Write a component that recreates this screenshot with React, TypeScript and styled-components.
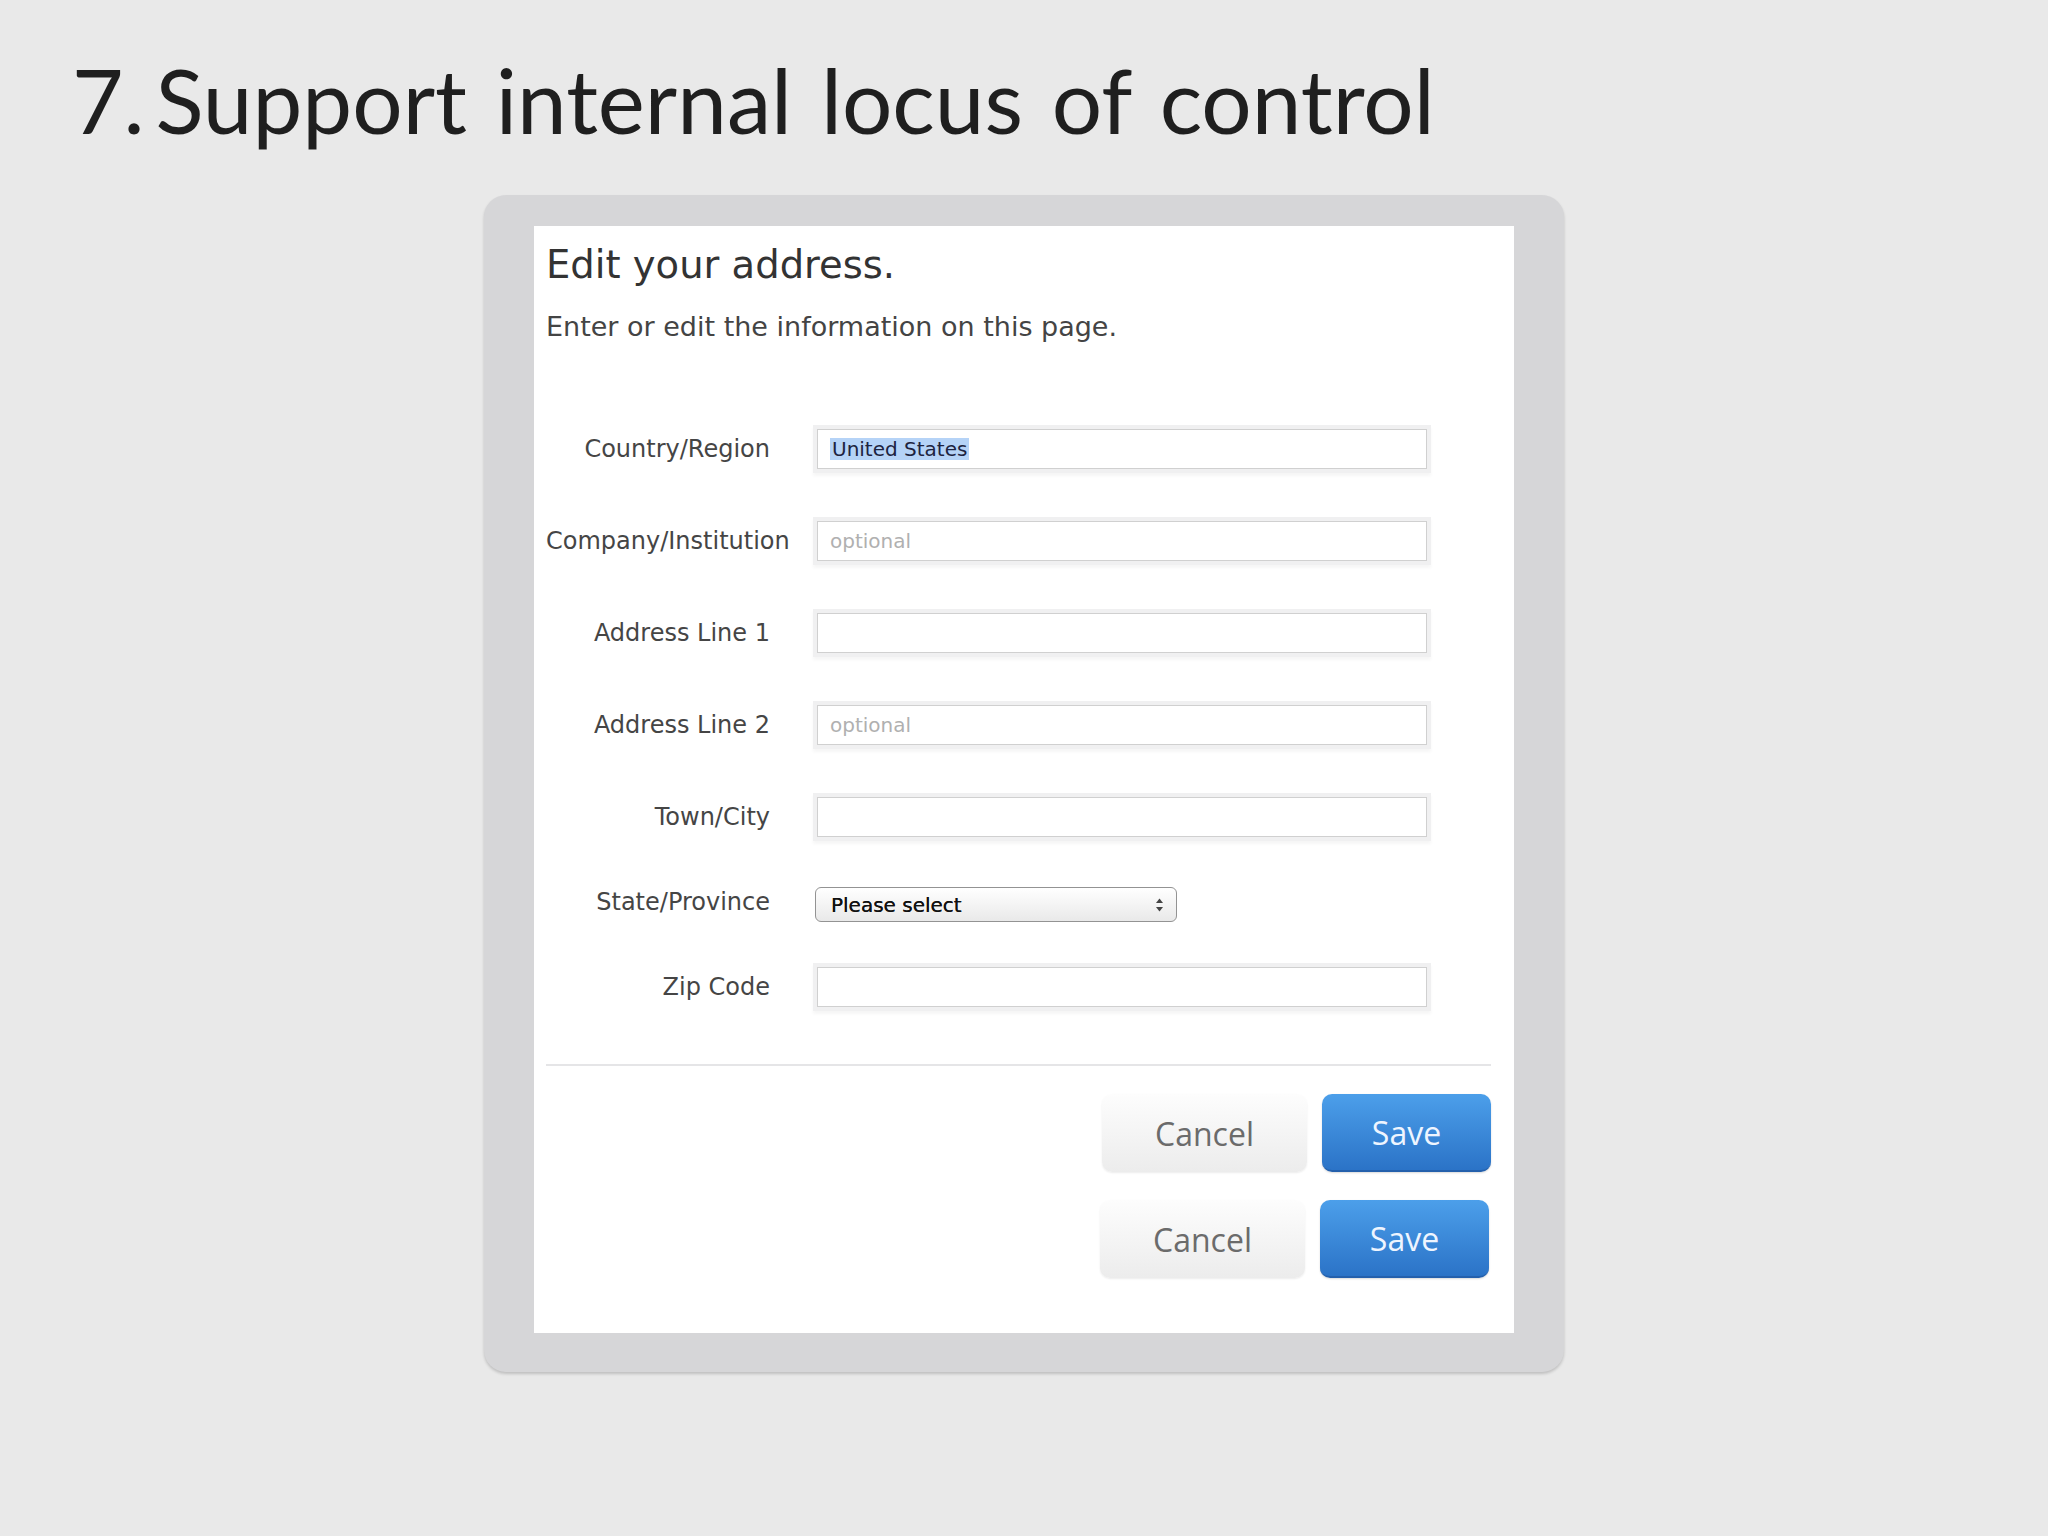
import React from 'react';
import styled, { createGlobalStyle } from 'styled-components';

const GlobalStyle = createGlobalStyle`
  html, body {
    margin: 0;
    padding: 0;
  }
  body {
    background: #e9e9e9;
    font-family: 'DejaVu Sans', 'Liberation Sans', sans-serif;
  }
`;

const Slide = styled.div`
  width: 2048px;
  height: 1536px;
  box-sizing: border-box;
  padding: 46px 0 0 72px;
`;

const Title = styled.h1`
  margin: 0;
  font-family: Lato, 'Open Sans', sans-serif;
  font-weight: 400;
  font-size: 89px;
  line-height: 108px;
  color: #1f1f1f;
  white-space: nowrap;
  word-spacing: 6px;
`;

const Number = styled.span`
  word-spacing: -12px;
`;

const Frame = styled.div`
  margin: 41px 0 0 412px;
  width: 1080px;
  box-sizing: border-box;
  padding: 31px 50px 39px;
  background: #d6d6d8;
  border-radius: 22px;
  box-shadow: 0 2px 3px rgba(0, 0, 0, 0.18);
`;

const Sheet = styled.div`
  background: #fff;
  padding: 16px 23px 55px 12px;
`;

const Heading = styled.h2`
  margin: 0 0 23px;
  font-size: 38.5px;
  line-height: 46px;
  font-weight: 400;
  color: #333;
`;

const Intro = styled.p`
  margin: 0 0 60px;
  font-size: 27px;
  line-height: 32px;
  color: #444;
`;

const Form = styled.div`
  display: flex;
  flex-direction: column;
`;

const FieldRow = styled.div<{ $h: number }>`
  display: flex;
  align-items: center;
  height: ${p => p.$h}px;
`;

const Label = styled.div<{ $lift?: number }>`
  flex: none;
  width: 224px;
  text-align: right;
  white-space: nowrap;
  font-size: 24px;
  color: #454545;
  margin-bottom: ${p => (p.$lift || 0) * 2}px;
`;

const FieldBox = styled.div`
  flex: none;
  margin-left: 47px;
  width: 610px;
  height: 40px;
  box-sizing: border-box;
  padding: 0 12px;
  display: flex;
  align-items: center;
  background: #fff;
  border: 1px solid #d0d0d0;
  box-shadow: 0 0 0 4px #f0f0f1, 0 3px 3px 4px rgba(0, 0, 0, 0.04);
  font-size: 20px;
`;

const Selected = styled.span`
  background: #b5d3f7;
  color: #1d2340;
  padding: 0 2px;
  line-height: 22px;
`;

const Placeholder = styled.span`
  color: #b0b0b0;
`;

const SelectBox = styled.div`
  flex: none;
  margin-left: 45px;
  width: 362px;
  height: 35px;
  box-sizing: border-box;
  padding: 0 12px 0 15px;
  display: flex;
  align-items: center;
  justify-content: space-between;
  border: 1.5px solid #939393;
  border-radius: 6px;
  background: linear-gradient(#ffffff, #e9e9e9);
  font-size: 20px;
  color: #111;
  text-shadow: 0 0 0.6px #111;
`;

const Divider = styled.div`
  margin-top: 36px;
  height: 2px;
  background: #e5e5e7;
`;

const ButtonRow = styled.div<{ $inset?: number }>`
  display: flex;
  justify-content: flex-end;
  gap: 15px;
  margin-top: 28px;
  padding-right: ${p => p.$inset || 0}px;
`;

const BaseButton = styled.button`
  height: 78px;
  border: none;
  border-radius: 10px;
  font-family: 'Open Sans', 'DejaVu Sans', sans-serif;
  font-size: 32px;
  padding: 0;
  cursor: pointer;
`;

const CancelButton = styled(BaseButton)`
  width: 205px;
  color: #6b6b6b;
  background: linear-gradient(#fdfdfd, #ececec);
  box-shadow: 0 1px 2px rgba(0, 0, 0, 0.08);
`;

const SaveButton = styled(BaseButton)`
  width: 169px;
  color: #eef5ff;
  background: linear-gradient(#4c9fea, #2b73c7);
  border-bottom: 2px solid #2460ac;
  box-shadow: 0 1px 2px rgba(0, 0, 0, 0.15);
`;

const Arrows = () => (
  <svg width="9" height="14" viewBox="0 0 9 14">
    <path d="M4.5 0.5 L8 5 H1 Z" fill="#444" />
    <path d="M4.5 13.5 L8 9 H1 Z" fill="#444" />
  </svg>
);

type Field = {
  label: string;
  value?: string;
  placeholder?: string;
  select?: boolean;
  h: number;
  lift?: number;
};

const fields: Field[] = [
  { label: 'Country/Region', value: 'United States', h: 92 },
  { label: 'Company/Institution', placeholder: 'optional', h: 92 },
  { label: 'Address Line 1', h: 92 },
  { label: 'Address Line 2', placeholder: 'optional', h: 92 },
  { label: 'Town/City', h: 92 },
  { label: 'State/Province', select: true, h: 83, lift: 3 },
  { label: 'Zip Code', h: 82 },
];

export default function App() {
  return (
    <>
      <GlobalStyle />
      <Slide>
        <Title>
          <Number>7. </Number>Support internal locus of control
        </Title>
        <Frame>
          <Sheet>
            <Heading>Edit your address.</Heading>
            <Intro>Enter or edit the information on this page.</Intro>
            <Form>
              {fields.map(f => (
                <FieldRow key={f.label} $h={f.h}>
                  <Label $lift={f.lift}>{f.label}</Label>
                  {f.select ? (
                    <SelectBox>
                      <span>Please select</span>
                      <Arrows />
                    </SelectBox>
                  ) : (
                    <FieldBox>
                      {f.value && <Selected>{f.value}</Selected>}
                      {f.placeholder && <Placeholder>{f.placeholder}</Placeholder>}
                    </FieldBox>
                  )}
                </FieldRow>
              ))}
            </Form>
            <Divider />
            <ButtonRow>
              <CancelButton>Cancel</CancelButton>
              <SaveButton>Save</SaveButton>
            </ButtonRow>
            <ButtonRow $inset={2}>
              <CancelButton>Cancel</CancelButton>
              <SaveButton>Save</SaveButton>
            </ButtonRow>
          </Sheet>
        </Frame>
      </Slide>
    </>
  );
}
